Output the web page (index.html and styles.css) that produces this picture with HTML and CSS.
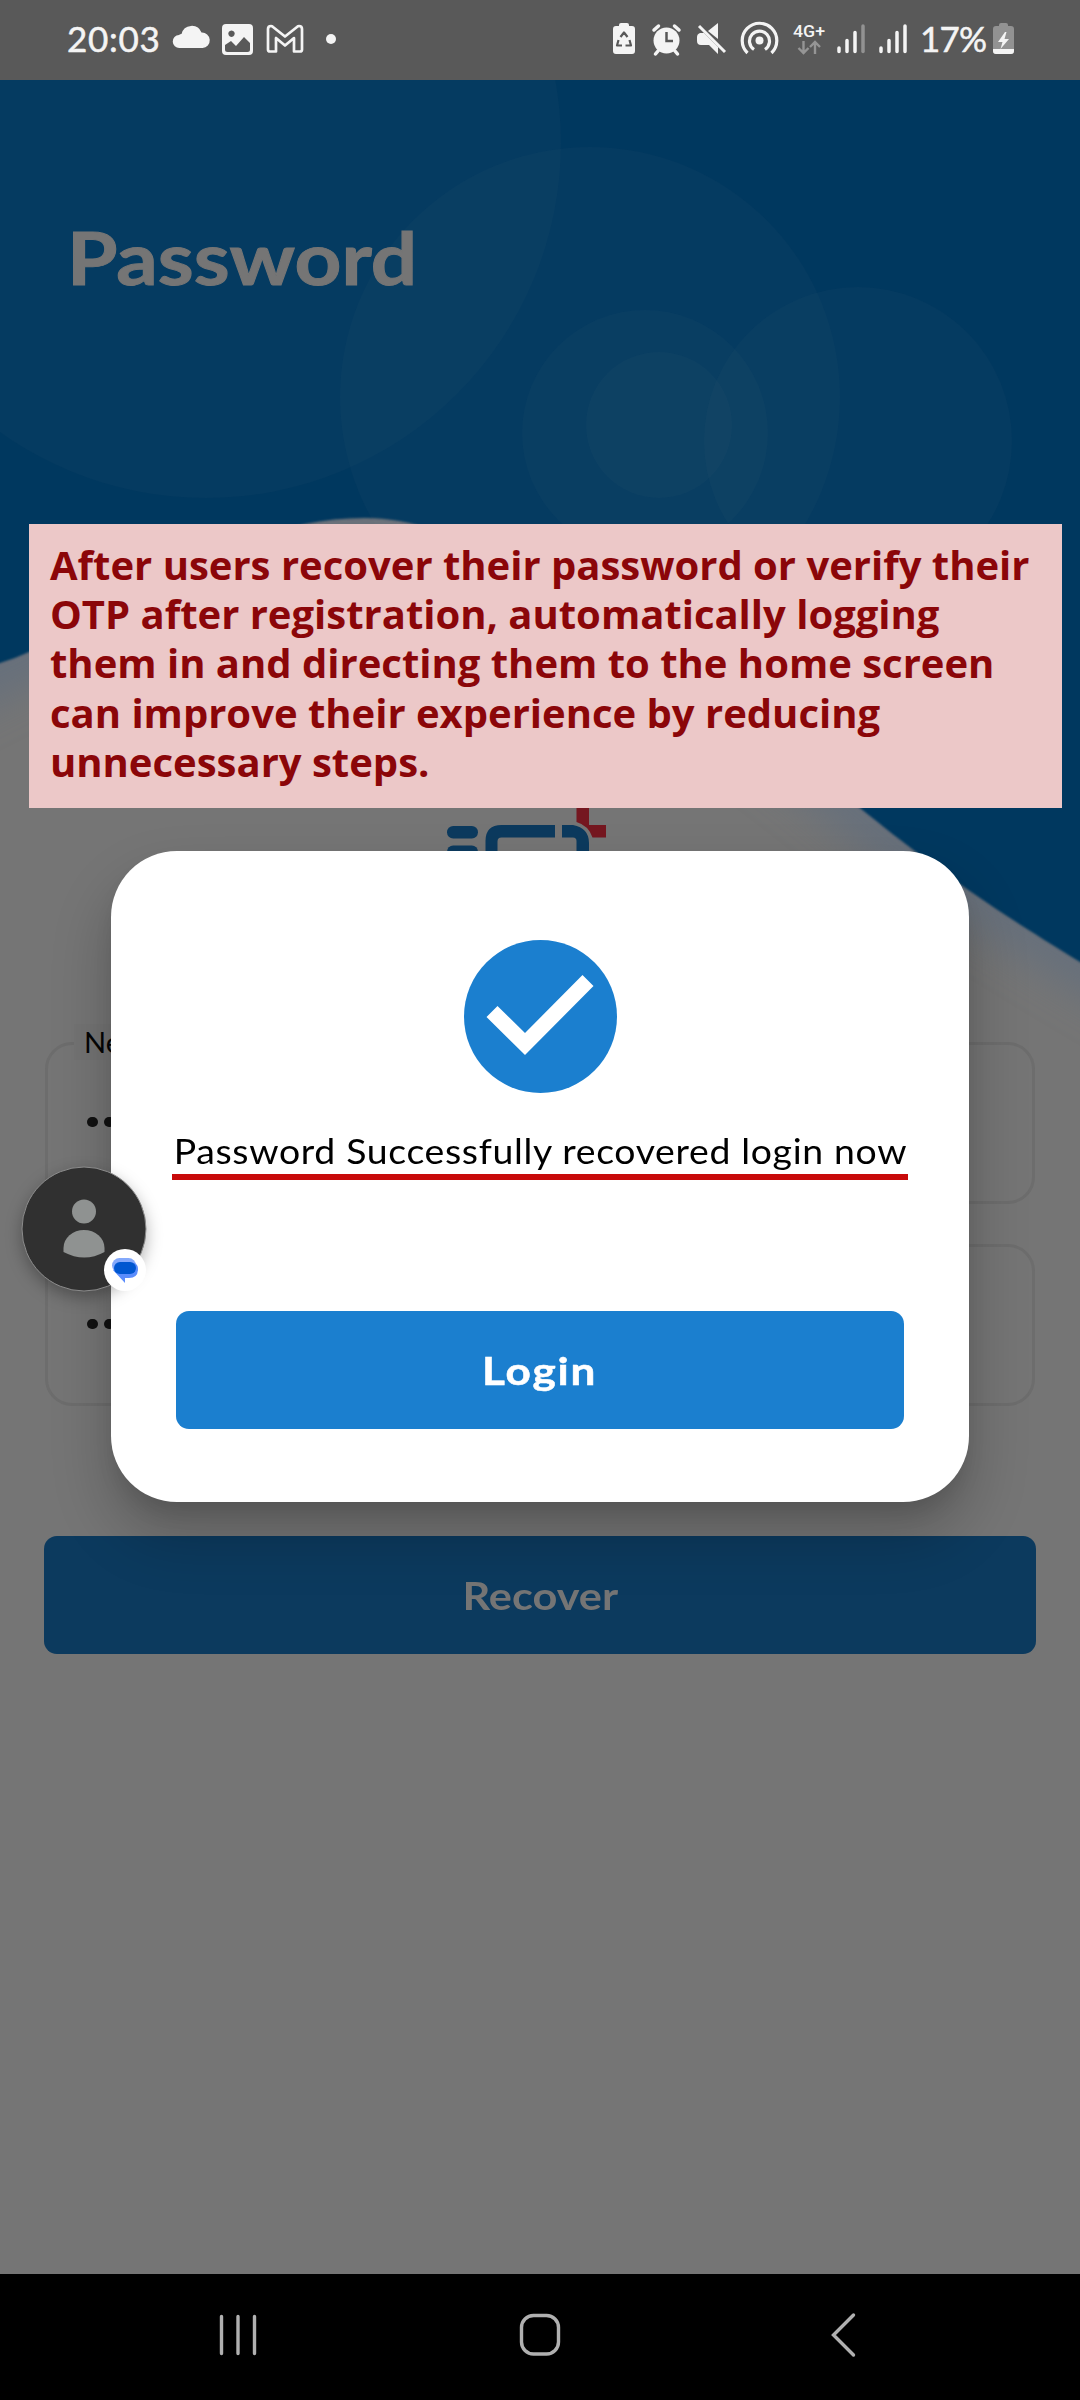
FILE: index.html
```html
<!DOCTYPE html>
<html lang="en">
<head>
<meta charset="utf-8">
<title>Password</title>
<link rel="stylesheet" href="styles.css">
</head>
<body>
<div class="phone">
  <header class="status">
    <span class="clock">20:03</span>
    <svg class="status-left" viewBox="170 0 170 80" width="170" height="80" fill="#f4f4f4">
      <path d="M179.500 48a6.500 6.500 0 0 1-.5-13q1-1 2.500-1a10.500 10.500 0 0 1 20-1.500a7.500 7.500 0 0 1 1 15.500z"/>
      <path fill-rule="evenodd" d="M226 24h23a4 4 0 0 1 4 4v23a4 4 0 0 1-4 4h-23a4 4 0 0 1-4-4V28a4 4 0 0 1 4-4zM231.500 30.500a3.200 3.200 0 1 0 .01 0zM225 45v4.500q0 2.500 2.500 2.500h20q2.500 0 2.500-2.500V43l-6-6-8 9-5-5z"/>
      <path fill="none" stroke="#f4f4f4" stroke-width="2.700" stroke-linejoin="round" d="M268 29q0-3 3-3 1 0 2 1l12 9.500L297 27q1-1 2-1 3 0 3 3v20.500q0 2-2 2h-6V38l-9 7.500-9-7.500v13.500h-6q-2 0-2-2z"/>
      <circle cx="331" cy="39" r="5"/>
    </svg>
    <svg class="status-right" viewBox="610 0 310 80" width="310" height="80" fill="#f4f4f4">
      <path d="M619 26v-1q0-2 2-2h6q2 0 2 2v1h3q3 0 3 3v22q0 3-3 3h-16q-3 0-3-3V29q0-3 3-3z"/>
      <path d="M620.500 37l3.500-4.500 3.500 4.500M629.500 40l1.500 5.500h-5.500M622 45.500h-5l1.500-5.500" fill="none" stroke="#585858" stroke-width="2.200" stroke-linejoin="round"/>
      <circle cx="666.500" cy="40.500" r="13"/>
      <path d="M654 30l4.500-4M679 30l-4.500-4M658 51l-2.500 3M675 51l2.500 3" stroke="#f4f4f4" stroke-width="3.500" stroke-linecap="round"/>
      <path d="M666.500 32v9h6.500" fill="none" stroke="#585858" stroke-width="2.500"/>
      <path d="M700 33h4l14 14v7l-9-9h-8q-4 0-4-4v-4q0-3 3-4zM708 31l10-8v16z"/>
      <path d="M699 26l26 26" stroke="#f4f4f4" stroke-width="3"/>
      <circle cx="759.500" cy="40.500" r="4"/>
      <path d="M754 49.500a10 10 0 1 1 11 0M747.500 53a17.300 17.300 0 1 1 24 0" fill="none" stroke="#f4f4f4" stroke-width="3.200"/>
      <text x="793" y="37" class="network" textLength="32" lengthAdjust="spacingAndGlyphs">4G+</text>
      <path d="M803.500 41v12m-5-5l5 5 5-5M815 54V42m-5 5l5-5 5 5" fill="none" stroke="#959595" stroke-width="2.400"/>
      <path d="M839 48v3.500M847 40.500v11M855 32.500v19M881 48v3.500M889 40.500v11M897 32.500v19M905 26v25.500" stroke="#f4f4f4" stroke-width="3.500" stroke-linecap="round"/>
      <path d="M863 26v25.500" stroke="#929292" stroke-width="3.500" stroke-linecap="round"/>
    </svg>
    <span class="percent">17%</span>
    <svg class="battery" viewBox="990 0 26 80" width="26" height="80">
      <path fill="#929292" d="M999 26v-1q0-2 2-2h5q2 0 2 2v1h3q3 0 3 3v22q0 3-3 3h-15q-3 0-3-3V29q0-3 3-3z"/>
      <path fill="#f4f4f4" d="M993 49h21v2q0 3-3 3h-15q-3 0-3-3zM1005 32l-7 10h4.500l-2 7 8.500-10h-4.500l2-7z"/>
    </svg>
  </header>

  <main class="screen">
    <svg class="backdrop" viewBox="0 80 1080 1000" width="1080" height="1000">
      <defs>
        <filter id="glow" x="-10%" y="-10%" width="120%" height="120%"><feGaussianBlur stdDeviation="20"/></filter>
        <filter id="edge"><feGaussianBlur stdDeviation="1.200"/></filter>
      </defs>
      <path filter="url(#glow)" fill="none" stroke="#66707c" stroke-width="60" d="M-60 696C0 665 29 652 29 652C180 580 250 540 365 540C500 540 700 680 860 808C915 852 965 892 1160 1004"/>
      <path filter="url(#edge)" fill="#00385f" d="M-10 40H1100V973L1080 962C965 892 915 852 860 808C700 680 500 518 365 518C250 518 180 580 29 652Q14 659 0 663L-10 667z"/>
      <rect x="0" y="80" width="1080" height="4" fill="#00385f"/>
      <g fill="#aa9696" fill-opacity=".03">
        <circle cx="206" cy="143" r="355"/>
        <circle cx="590" cy="397" r="250"/>
        <circle cx="645" cy="433" r="123"/>
        <circle cx="659" cy="425" r="73"/>
        <circle cx="858" cy="441" r="154"/>
      </g>
    </svg>
    <h1 class="title">Password</h1>
    <svg class="logo" viewBox="440 800 174 60" width="174" height="60">
      <g fill="#0c3a5e">
        <rect x="447" y="826" width="31" height="12.500" rx="6.200"/>
        <rect x="447" y="845.500" width="31" height="12.500" rx="6.200"/>
        <path d="M485.500 860V841q0-16 16-16H555v12.500h-53.500q-4 0-4 4V860zM562 825h11q16 3 16 18v17h-12.500v-19q0-3.500-3.500-3.500h-11z"/>
      </g>
      <path fill="#751720" d="M576.500 800H589v25h17v12.500h-13.500q-4-12-16-15.500z"/>
    </svg>
    <div class="fields">
      <div class="field"><span class="label">Ne</span><span class="dots"><i></i><i></i></span></div>
      <div class="field"><span class="dots"><i></i><i></i></span></div>
    </div>
    <div class="button recover"><span class="caption">Recover</span></div>
  </main>

  <section class="modal">
    <svg class="check" viewBox="0 0 153 153" width="153" height="153">
      <circle cx="76.500" cy="76.500" r="76.500" fill="#1b7fcf"/>
      <path fill="#fff" d="M22.500 77l11-11L61 93 118.500 35l11 11L61 115z"/>
    </svg>
    <p class="message"><span class="message-text">Password Successfully recovered login now</span></p>
    <div class="button login"><span class="caption caption-wide">Login</span></div>
  </section>

  <aside class="note">After users recover their password or verify their OTP after registration, automatically logging them in and directing them to the home screen can improve their experience by reducing unnecessary steps.</aside>

  <svg class="chat-head" viewBox="0 0 128 130" width="128" height="130">
    <circle class="chat-disc" cx="63" cy="63" r="62" fill="#303030" stroke="#8c8c8c" stroke-width="1"/>
    <circle cx="63" cy="45.500" r="12" fill="#8f9291"/>
    <path fill="#8f9291" d="M42.500 86V82a20.500 18 0 0 1 41 0v4q-20 11-41 0z"/>
    <circle cx="104" cy="104" r="21" fill="#fff"/>
    <rect x="91" y="92" width="24" height="15" rx="7.500" fill="#84a9fb"/>
    <path fill="#5b8dfc" d="M92 104l12 13v-5h4q9 0 9-9 0-5-4-6z"/>
    <rect x="93" y="96" width="22" height="12" rx="6" fill="#0057d0"/>
  </svg>

  <nav class="nav">
    <svg viewBox="0 0 40 46" width="40" height="46"><path d="M3.500 4.500v37M20 4.500v37M36.500 4.500v37"/></svg>
    <svg viewBox="0 0 44 46" width="44" height="46"><rect x="2.500" y="3.500" width="37" height="38.500" rx="12"/></svg>
    <svg viewBox="0 0 40 46" width="40" height="46"><path d="M29.500 3L9.500 23l20 20"/></svg>
  </nav>
</div>
</body>
</html>
```
FILE: styles.css
```css
* { box-sizing: border-box; }
body { margin: 0; background: #757575; }
svg { display: block; flex: none; }

.phone {
  position: relative;
  display: flex;
  flex-direction: column;
  width: 1080px;
  height: 2400px;
  overflow: hidden;
  font-family: Lato, "Open Sans", sans-serif;
}

.status {
  display: flex;
  align-items: center;
  height: 80px;
  padding-left: 67px;
  background: #595959;
  color: #f4f4f4;
  white-space: nowrap;
}
.clock { width: 103px; font-size: 35px; line-height: 76px; height: 80px; letter-spacing: .7px; -webkit-text-stroke: .5px #f4f4f4; }
.status-right { margin-left: 270px; }
.network { font: 500 17px Roboto, sans-serif; }
.percent { width: 70px; height: 80px; font-size: 35px; line-height: 77px; letter-spacing: -.8px; -webkit-text-stroke: .5px #f4f4f4; }

.screen {
  position: relative;
  display: flex;
  flex-direction: column;
  flex: 1;
  padding: 0 44px;
  background: #757575;
}
.backdrop { position: absolute; left: 0; top: 0; }
.title {
  position: relative;
  align-self: flex-start;
  margin: 127px 0 0 23px;
  height: 104px;
  font-size: 72px;
  line-height: 100px;
  font-weight: 700;
  color: #757575;
  -webkit-text-stroke: 1px #757575;
  transform: scaleX(1.135);
  transform-origin: left;
}
.logo { position: relative; margin: 489px 0 0 396px; }

.fields {
  display: flex;
  flex-direction: column;
  gap: 40px;
  margin-top: 182px;
}
.field {
  position: relative;
  height: 162px;
  margin: 0 1px;
  padding: 72px 0 0 39px;
  border: 3px solid #6d6d6d;
  border-radius: 27px;
}
.label {
  position: absolute;
  left: 26px;
  top: -21px;
  padding: 0 10px;
  background: #737373;
  color: #050505;
  font-size: 29px;
  line-height: 36px;
}
.dots { display: flex; gap: 6px; }
.dots i { width: 11px; height: 10px; border-radius: 5px; background: #111; }

.button {
  height: 118px;
  border-radius: 13px;
  text-align: center;
  font-size: 38px;
  font-weight: 700;
  line-height: 118px;
}
.caption { display: inline-block; transform: scaleX(1.14); }
.caption-wide { letter-spacing: 1.5px; transform: scaleX(1.16); -webkit-text-stroke: .5px #fff; }
.recover { margin-top: 130px; background: #0c3a5e; color: #757575; }

.modal {
  position: absolute;
  left: 111px;
  top: 851px;
  display: flex;
  flex-direction: column;
  align-items: center;
  width: 858px;
  height: 651px;
  padding: 89px 61px 0;
  border-radius: 66px;
  background: #fff;
  box-shadow: 0 33px 57px 4px rgba(0, 0, 0, .2), 0 14px 22px -6px rgba(0, 0, 0, .12);
}
.message {
  width: 736px;
  height: 60px;
  margin: 27px 0 0;
  border-bottom: 6px solid #c80a0a;
  color: #000;
  text-align: center;
  font-size: 34px;
  line-height: 62px;
  letter-spacing: .6px;
  white-space: nowrap;
}
.message-text { display: inline-block; transform: scaleX(1.1); }
.login { width: 728px; margin: 131px 0 0; background: #1b7fcf; color: #fff; }

.note {
  position: absolute;
  left: 29px;
  top: 524px;
  width: 1033px;
  height: 284px;
  padding: 16px 20px 0 21px;
  background: #ecc8c8;
  color: #8b0609;
  font: 700 40px/49.200px "Open Sans", sans-serif;
}

.chat-head { position: absolute; left: 21px; top: 1166px; overflow: visible; }
.chat-disc { filter: drop-shadow(0 6px 8px rgba(0, 0, 0, .3)); }

.nav {
  position: relative;
  display: flex;
  align-items: center;
  justify-content: space-between;
  height: 126px;
  padding: 0 216px 4px 218px;
  background: #000;
}
.nav path, .nav rect { fill: none; stroke: #b0b0b0; stroke-width: 3.400; stroke-linecap: round; }
```
